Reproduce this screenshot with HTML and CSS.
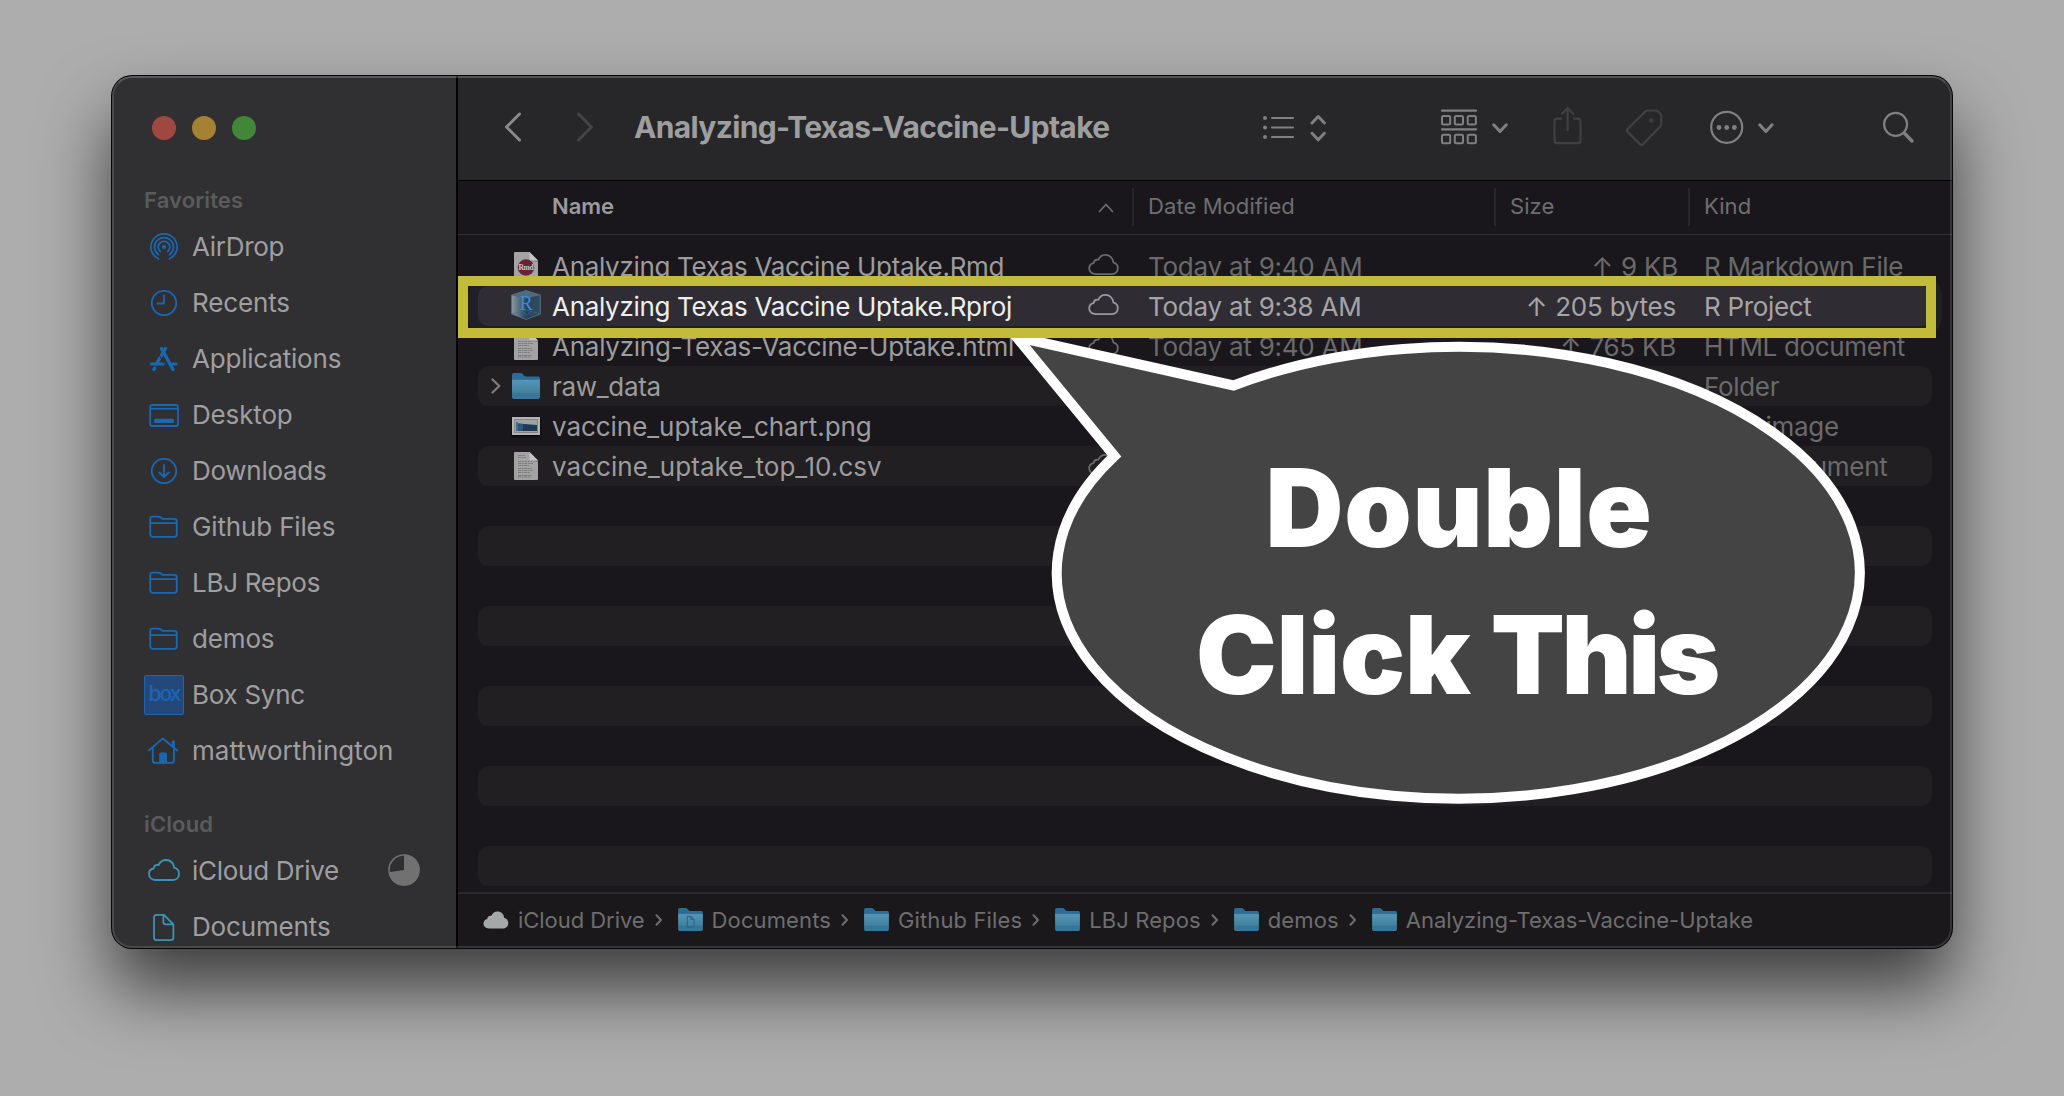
FILE: index.html
```html
<!DOCTYPE html>
<html lang="en">
<head>
<meta charset="utf-8">
<title>Analyzing-Texas-Vaccine-Uptake</title>
<link rel="stylesheet" href="styles.css">
</head>
<body>
<svg class="defs" width="0" height="0" aria-hidden="true">
  <defs>
    <linearGradient id="folderFront" x1="0" y1="0" x2="0" y2="1">
      <stop offset="0" stop-color="#5595b6"/><stop offset="0.7" stop-color="#43809f"/><stop offset="1" stop-color="#34739a"/>
    </linearGradient>
    <linearGradient id="cubeLeft" x1="0" y1="0" x2="1" y2="0">
      <stop offset="0" stop-color="#8a9aa3"/><stop offset="1" stop-color="#2d4357"/>
    </linearGradient>
    <linearGradient id="cubeRight" x1="0" y1="0" x2="1" y2="0">
      <stop offset="0" stop-color="#2a4259"/><stop offset="1" stop-color="#324e60"/>
    </linearGradient>
    <symbol id="folder" viewBox="0 0 28 26">
      <path d="M0 2.200C0 .8.8 0 2 0h6.500c1 0 1.500.3 2.200 1l1.600 1.700c.5.5 1 .7 1.800.7H26c1.300 0 2 .7 2 2V14H0z" fill="#2d6c96"/>
      <path d="M0 6.500h28V24c0 1.300-.7 2-2 2H2c-1.300 0-2-.7-2-2z" fill="url(#folderFront)"/>
      <path d="M0 6.300h28M0 20.700h28M0 22.500h28" stroke="#2f6a90" stroke-width=".7"/>
    </symbol>
    <symbol id="sheet" viewBox="0 0 24 28">
      <path d="M0 1Q0 0 1 0h14.500L24 8.500V27q0 1-1 1H1q-1 0-1-1z" fill="#a3a3a3"/>
      <path d="M15.500 0L24 8.500h-7.500q-1 0-1-1z" fill="#c4c4c4"/>
      <path d="M16 8.700h8v1.300z" fill="#777"/>
    </symbol>
    <symbol id="lines" viewBox="0 0 24 28">
      <path d="M4 3.500h7M4 5.500h8M4 9.500h14M4 11.500h15M4 13.500h11M4 16.500h14M4 18.500h15M4 20.500h12M4 23.500h14M4 25h13" stroke="#777" stroke-width=".9" stroke-dasharray="3 .6 2 .6"/>
    </symbol>
    <symbol id="cloud" viewBox="0 0 32 22">
      <path d="M8 21C4 21 1 18.600 1 15c0-3 2-5 4.600-5.500C6 7 8 5.600 10.600 6 12 3 14.600 1 18 1c4.600 0 8 3.300 8.200 7.700C29 9.500 31 11.800 31 14.700 31 18.300 28.500 21 25 21z" fill="none" stroke="currentColor" stroke-width="1.900" stroke-linejoin="round"/>
    </symbol>
    <symbol id="sideFolder" viewBox="-20 -20 40 40">
      <path d="M-13.700-8.600V7.300q0 2.500 2.500 2.500h21.500q2.500 0 2.500-2.500V-5.700q0-2.500-2.500-2.500H-.8q-1 0-1.700-.6l-1-.9q-.9-.7-2-.7h-6q-2.200 0-2.200 1.800zM-13.700-3.900h26.500" fill="none" stroke="currentColor" stroke-width="1.800" stroke-linejoin="round"/>
    </symbol>
    <symbol id="crumb" viewBox="0 0 8 12">
      <path d="M1.500 1.200L6 6l-4.500 4.800" fill="none" stroke="currentColor" stroke-width="2" stroke-linecap="round" stroke-linejoin="round"/>
    </symbol>
  </defs>
</svg>

<div class="window">
  <aside class="sidebar">
    <div class="lights"><i class="red"></i><i class="amber"></i><i class="green"></i></div>
    <h2 class="group">Favorites</h2>
    <ul class="places">
      <li><svg class="ico" viewBox="-20 -20 40 40"><g fill="none" stroke="currentColor" stroke-width="1.700" stroke-linecap="round"><path d="M-5.500 11.800A13.100 13.100 0 1 1 5.500 11.800"/><path d="M-5.500 7.800A9.500 9.500 0 1 1 5.500 7.800"/><path d="M-3.700 4.500A5.800 5.800 0 1 1 3.700 4.500"/></g><circle r="2" fill="currentColor"/></svg><span class="t1">AirDrop</span></li>
      <li><svg class="ico" viewBox="-20 -20 40 40"><g fill="none" stroke="currentColor" stroke-width="1.800" stroke-linecap="round" stroke-linejoin="round"><circle r="12.200"/><path d="M0-7.500V.5H-6.500"/></g></svg><span>Recents</span></li>
      <li><svg class="ico" viewBox="-20 -20 40 40"><g fill="none" stroke="currentColor" stroke-linecap="round"><path d="M-12.500 5h12.500M7.500 5h4.500" stroke-width="3.200"/><path d="M1.400-10.500L-7.500 5" stroke-width="3.400"/><path d="M-9.300 9.300L-10 10.400" stroke-width="3.400"/><path d="M-2.500-10.500L9 10.500" stroke-width="3.400"/></g><path d="M-4.200-6.500L1.500 3.600" stroke="#303032" stroke-width="1" transform="translate(-.6 2.400)"/></svg><span class="t2">Applications</span></li>
      <li><svg class="ico" viewBox="-20 -20 40 40"><rect x="-13.800" y="-10" width="27.800" height="21" rx="2" fill="none" stroke="currentColor" stroke-width="1.800"/><path d="M-13.800-6.300h27.800" stroke="currentColor" stroke-width="1.700"/><rect x="-9.800" y="3.700" width="19.700" height="4.200" rx="1" fill="currentColor"/></svg><span>Desktop</span></li>
      <li><svg class="ico" viewBox="-20 -20 40 40"><g fill="none" stroke="currentColor" stroke-width="1.800" stroke-linecap="round" stroke-linejoin="round"><circle r="12.200"/><path d="M0-6V6M-4.700 1.500L0 6.200 4.700 1.500"/></g></svg><span class="t4">Downloads</span></li>
      <li><svg class="ico"><use href="#sideFolder"/></svg><span>Github Files</span></li>
      <li><svg class="ico"><use href="#sideFolder"/></svg><span class="t4">LBJ Repos</span></li>
      <li><svg class="ico"><use href="#sideFolder"/></svg><span>demos</span></li>
      <li><b class="box">box</b><span class="t4">Box Sync</span></li>
      <li><svg class="ico" viewBox="-20 -20 40 40"><path d="M-15-.6L-1.200-12.600 13.200-.6M-11.200-3.500V9.500q0 2.400 2.400 2.400H7.600q2.400 0 2.400-2.400V-3.500M9.500-4v-5.500" fill="none" stroke="currentColor" stroke-width="1.900" stroke-linecap="round" stroke-linejoin="round"/><path d="M7.700-10.300h3.200V-2L7.700-5z" fill="currentColor"/><path d="M-4.800 12.500V3q0-1.500 1.500-1.500h4.800q1.500 0 1.500 1.500v9.500z" fill="currentColor"/></svg><span class="t3">mattworthington</span></li>
    </ul>
    <h2 class="group second">iCloud</h2>
    <ul class="places teal">
      <li><svg class="ico cl" viewBox="0 0 32 22"><use href="#cloud"/></svg><span class="t4">iCloud Drive</span>
        <svg class="pie" viewBox="-16 -16 32 32"><circle r="15" fill="none" stroke="currentColor" stroke-width="1.600"/><path d="M0 0V-15.500A15.500 15.500 0 1 1-15.300 2.200z" fill="currentColor"/></svg></li>
      <li><svg class="ico" viewBox="-20 -20 40 40"><path d="M-10-9.500q0-2.600 2.600-2.600H0L9.400-2.500V10.500q0 2.600-2.600 2.600H-7.400q-2.600 0-2.600-2.600zM-.6-12V-5q0 2.300 2.300 2.300H9" fill="none" stroke="currentColor" stroke-width="1.800" stroke-linejoin="round"/></svg><span>Documents</span></li>
    </ul>
  </aside>

  <main class="main">
    <header class="toolbar">
      <svg class="back" width="18" height="30" viewBox="0 0 18 30"><path d="M15.500 2L2.500 15l13 13"/></svg>
      <svg class="fwd" width="18" height="30" viewBox="0 0 18 30"><path d="M2.500 2l13 13-13 13"/></svg>
      <h1>Analyzing-Texas-Vaccine-Uptake</h1>
      <svg class="list" width="66" height="48" viewBox="1262 104 66 48"><path d="M1272 118h21M1272 127.500h21M1272 137h21" /><path d="M1312 123l6.200-6.500 6.200 6.500M1312 133.300l6.200 6.500 6.200-6.500" stroke-width="3"/><g class="dots"><circle cx="1265" cy="118" r="2"/><circle cx="1265" cy="127.500" r="2"/><circle cx="1265" cy="137" r="2"/></g></svg>
      <svg class="groupby" width="70" height="48" viewBox="1440 104 70 48"><path d="M1442 110.700h34M1442 129.300h34"/><g stroke-width="2"><rect x="1442" y="116" width="8.200" height="8.500" rx="1.500"/><rect x="1454.800" y="116" width="8.200" height="8.500" rx="1.500"/><rect x="1467.700" y="116" width="8.200" height="8.500" rx="1.500"/><rect x="1442" y="134.700" width="8.200" height="8.500" rx="1.500"/><rect x="1454.800" y="134.700" width="8.200" height="8.500" rx="1.500"/><rect x="1467.700" y="134.700" width="8.200" height="8.500" rx="1.500"/></g><path d="M1493.700 124.800l6.300 6.700 6.300-6.700" stroke-width="3"/></svg>
      <svg class="share off" width="32" height="48" viewBox="1552 104 32 48"><path d="M1561 118.700h-3.500q-3 0-3 3v18.500q0 3 3 3h20q3 0 3-3v-18.500q0-3-3-3h-3.500M1567.600 130v-21.500M1562 113.800l5.600-5.800 5.600 5.800"/></svg>
      <svg class="tag off" width="40" height="48" viewBox="1625 104 40 48"><path d="M1645.500 111.400q1-.9 2.300-.9h8q1.300 0 2.300 1l2.300 2.500q.9 1 .9 2.300v7.700q0 1.400-1 2.400l-17 17.700q-1.700 1.700-3.400 0l-12.200-12.200q-1.500-1.700.2-3.300z"/><circle class="dots" cx="1651.300" cy="120.500" r="2.200"/></svg>
      <svg class="more" width="68" height="48" viewBox="1709 104 68 48"><circle cx="1726.700" cy="127.300" r="15.500"/><g class="dots"><circle cx="1719" cy="127.500" r="2.400"/><circle cx="1726.700" cy="127.500" r="2.400"/><circle cx="1734.400" cy="127.500" r="2.400"/></g><path d="M1759.700 124.800l6.200 6.700 6.200-6.700" stroke-width="3"/></svg>
      <svg class="search" width="34" height="48" viewBox="1882 104 34 48"><circle cx="1895.600" cy="124.300" r="11.500"/><path d="M1904.200 133l7.800 8" stroke-width="3.400"/></svg>
    </header>

    <div class="thead">
      <div class="th name">Name<svg width="16" height="10" viewBox="0 0 16 10"><path d="M1.500 8.500L8 1.500l6.500 7" fill="none" stroke="#6c6c6c" stroke-width="1.700" stroke-linecap="round"/></svg></div>
      <div class="th date">Date Modified</div>
      <div class="th size">Size</div>
      <div class="th kind">Kind</div>
    </div>

    <div class="rows">
      <div class="row"><i></i><svg class="file" viewBox="0 0 24 28"><use href="#sheet"/><circle cx="12" cy="15.500" r="8.200" fill="#672338"/><text x="12" y="18" text-anchor="middle" class="rmd">Rmd</text></svg><span class="fn">Analyzing Texas Vaccine Uptake.Rmd</span><svg class="cloud"><use href="#cloud"/></svg><span>Today at 9:40 AM</span><span class="sz kb"><em>↑</em>9 KB</span><span class="kd">R Markdown File</span></div>
      <div class="row selected"><i></i><svg class="cube" viewBox="0 0 30 30"><path d="M15 .5L29.500 5v19L15 29.500.5 24V5z" fill="#3f5563"/><path d="M.5 5L15 8.500v21L.5 24z" fill="url(#cubeLeft)"/><path d="M15 8.500L29.500 5v19L15 29.500z" fill="url(#cubeRight)"/><path d="M15 .5L29.500 5 15 8.500.5 5z" fill="#536a77"/><path d="M15 .5L29.500 5v19L15 29.500.5 24V5z" fill="none" stroke="#4a7387" stroke-width=".8"/><path d="M.5 24L15 20l14.500 4" fill="none" stroke="#42697b" stroke-width=".6"/><text x="15" y="19.500" text-anchor="middle" class="rletter">R</text><path d="M10 22.500h3l3 2.500M17 24l2.500-1.500" stroke="#286090" stroke-width="1.200" fill="none"/></svg><span class="fn">Analyzing Texas Vaccine Uptake.Rproj</span><svg class="cloud"><use href="#cloud"/></svg><span>Today at 9:38 AM</span><span class="sz"><em>↑</em>205 bytes</span><span class="kd">R Project</span></div>
      <div class="row"><i></i><svg class="file" viewBox="0 0 24 28"><use href="#sheet"/><use href="#lines"/></svg><span class="fn dash">Analyzing-Texas-Vaccine-Uptake.html</span><svg class="cloud"><use href="#cloud"/></svg><span>Today at 9:40 AM</span><span class="sz"><em>↑</em>765 KB</span><span class="kd">HTML document</span></div>
      <div class="row"><svg class="disc" viewBox="0 0 10 16"><path d="M1.500 1.500L8.300 8l-6.800 6.500" fill="none" stroke="#7b7b7b" stroke-width="2.400" stroke-linecap="round" stroke-linejoin="round"/></svg><svg class="fold"><use href="#folder"/></svg><span class="fn raw">raw_data</span><i></i><span></span><span class="sz"></span><span class="kd">Folder</span></div>
      <div class="row"><i></i><svg class="pic" viewBox="0 0 28 18"><path d="M0 0h28v18H0z" fill="#b4b4b4"/><path d="M2 2h24v14H2z" fill="#858585"/><path d="M3 3h22v12H3z" fill="#a0a3a6"/><path d="M4 5h2v9H4z" fill="#3a6ea5"/><path d="M6 6.500L25 8v6H6z" fill="#1f3a55"/><path d="M6 6.500l5 .4V14H6z" fill="#2d5580"/></svg><span class="fn chart">vaccine_uptake_chart.png</span><i></i><span></span><span class="sz"></span><span class="kd">PNG image</span></div>
      <div class="row"><i></i><svg class="file" viewBox="0 0 24 28"><use href="#sheet"/><use href="#lines"/></svg><span class="fn us">vaccine_uptake_top_10.csv</span><svg class="cloud"><use href="#cloud"/></svg><span></span><span class="sz"></span><span class="kd">CSV Document</span></div>
      <div class="row"></div><div class="row"></div><div class="row"></div><div class="row"></div><div class="row"></div>
      <div class="row"></div><div class="row"></div><div class="row"></div><div class="row"></div><div class="row"></div>
    </div>

    <footer class="pathbar">
      <svg class="solid" viewBox="0 0 26 18"><path d="M6 17.500C2.500 17.500.5 15.500.5 12.600c0-2.500 1.600-4.200 3.700-4.700.4-2.200 2-3.400 4.200-3.100C9.500 2 11.700.5 14.500.5c3.700 0 6.400 2.700 6.600 6.300 2.500.6 4.200 2.600 4.200 5.200 0 3.200-2.200 5.500-5.300 5.500z" fill="#a5a8a9"/></svg><span class="c0">iCloud Drive</span>
      <svg class="sep"><use href="#crumb"/></svg><svg class="pf" viewBox="0 0 28 26"><use href="#folder"/><path d="M10.500 9.500h4l3.500 3.500v8.500h-7.500zM14.500 9.500V13H18" fill="none" stroke="#2b678f" stroke-width="1.200"/></svg><span>Documents</span>
      <svg class="sep"><use href="#crumb"/></svg><svg class="pf"><use href="#folder"/></svg><span class="c2">Github Files</span>
      <svg class="sep"><use href="#crumb"/></svg><svg class="pf"><use href="#folder"/></svg><span>LBJ Repos</span>
      <svg class="sep"><use href="#crumb"/></svg><svg class="pf"><use href="#folder"/></svg><span>demos</span>
      <svg class="sep"><use href="#crumb"/></svg><svg class="pf"><use href="#folder"/></svg><span class="last">Analyzing-Texas-Vaccine-Uptake</span>
    </footer>
  </main>
</div>

<div class="callout">
  <svg width="880" height="490" viewBox="1000 326 880 490"><path d="M1015.500 337L1232.500 385.500A401.500 226 0 1 1 1113.500 456Z" fill="#444" stroke="#fff" stroke-width="10" stroke-miterlimit="8"/></svg>
  <p><span class="line w1">Double</span><span class="line low"><span class="w2">Click</span> <span class="w3">This</span></span></p>
</div>
<div class="frame"></div>
</body>
</html>
```
FILE: styles.css
```css
* { box-sizing: border-box; }

body {
  margin: 0;
  width: 2064px;
  height: 1096px;
  overflow: hidden;
  position: relative;
  background: #adadad;
  font-family: Inter, "Liberation Sans", sans-serif;
  padding: 76px 112px;
}

h1, h2, p, ul { margin: 0; padding: 0; }
li { list-style: none; }
.defs { position: absolute; }

.window {
  position: relative;
  display: flex;
  width: 1840px;
  height: 872px;
  border-radius: 20px;
  overflow: hidden;
  background: #19171b;
  box-shadow: 0 0 0 1px #060606, 0 40px 70px rgba(0, 0, 0, .65);
}
/* bright hairline along the inner edge of the window */
.window::after {
  content: "";
  position: absolute;
  inset: 0;
  border: 2px solid rgba(255, 255, 255, .12);
  border-top-color: rgba(255, 255, 255, .2);
  border-radius: 20px;
}

/* Sidebar */
.sidebar {
  width: 346px;
  flex: none;
  height: 872px;
  overflow: hidden;
  background: #303032;
  border-right: 2px solid #020202;
  color: #9f9fa0;
  font-size: 26px;
}
.lights { display: flex; gap: 16px; padding: 40px 0 0 40px; }
.lights i { width: 24px; height: 24px; border-radius: 50%; }
.red { background: #9f4841; }
.amber { background: #a68134; }
.green { background: #418639; }
.group {
  margin: 44px 0 0 32px;
  height: 35px;
  line-height: 32px;
  font-size: 22px;
  font-weight: 600;
  letter-spacing: .13px;
  color: #5b5b5c;
}
.group.second { margin-top: 29px; }
.places li {
  display: flex;
  align-items: center;
  height: 56px;
  padding-left: 32px;
  letter-spacing: -.15px;
  line-height: 32px;
  white-space: nowrap;
}
.ico { width: 40px; height: 40px; margin-right: 8px; color: #1a67b3; flex: none; }
.teal .ico { color: #3d92b3; }
.ico.cl { width: 32px; height: 22px; margin: -2px 12px 0 4px; }
.places .t1 { letter-spacing: -.3px; }
.places .t2 { letter-spacing: -.2px; }
.places .t3 { letter-spacing: 0; }
.places .t4 { letter-spacing: -.28px; }
.box {
  width: 40px;
  height: 40px;
  margin-right: 8px;
  border: 1px solid #1b66b3;
  border-radius: 2px;
  background: #25487a;
  color: #1a66b5;
  font-size: 21px;
  font-weight: 500;
  line-height: 36px;
  text-align: center;
  letter-spacing: -1.9px;
}
.pie { width: 32px; height: 32px; margin-left: 49px; margin-top: -2px; color: #717172; }

/* Main pane */
.main { flex: 1; display: flex; flex-direction: column; min-width: 0; }

.toolbar {
  height: 105px;
  display: flex;
  align-items: center;
  padding: 0 36px 1px 46px;
  background: #272729;
  border-bottom: 1px solid #020202;
}
.toolbar svg {
  flex: none;
  fill: none;
  stroke: #808082;
  stroke-width: 2.2;
  stroke-linecap: round;
  stroke-linejoin: round;
}
.toolbar .dots { fill: #808082; stroke: none; }
.toolbar .off { stroke: #404042; }
.toolbar .off .dots { fill: #404042; }
.toolbar .back { stroke-width: 3; stroke: #8a8a8c; margin-top: -1px; }
.toolbar .fwd { stroke-width: 3; stroke: #454547; margin-left: 54px; margin-top: -1px; }
.toolbar h1 {
  margin-left: 40px;
  margin-top: -2px;
  width: 628px;
  font-size: 30px;
  line-height: 38px;
  font-weight: 650;
  letter-spacing: -.65px;
  color: #9e9e9f;
  white-space: nowrap;
}
.toolbar .groupby { margin-left: 112px; }
.toolbar .share { margin-left: 42px; }
.toolbar .tag { margin-left: 41px; }
.toolbar .more { margin-left: 44px; }
.toolbar .search { margin-left: auto; }

.thead {
  height: 54px;
  display: flex;
  align-items: center;
  padding-bottom: 2px;
  border-bottom: 1px solid #302e32;
  color: #6e6e6f;
  font-size: 22px;
  letter-spacing: .08px;
}
.th { height: 38px; line-height: 36px; border-left: 2px solid #272629; padding-left: 14px; }
.th.name {
  width: 674px;
  display: flex;
  align-items: center;
  justify-content: space-between;
  border: 0;
  padding: 0 18px 0 94px;
  color: #9b9b9c;
  font-weight: 600;
  line-height: 34px;
  padding-bottom: 2px;
  letter-spacing: -.05px;
}
.th.name svg { margin-top: 4px; }
.th.date { width: 362px; }
.th.size { width: 194px; }

.rows { flex: 1; min-height: 0; overflow: hidden; padding: 11px 20px 0; }
.row {
  height: 40px;
  border-radius: 10px;
  display: grid;
  grid-template-columns: 34px 40px 536px 60px 350px 178px 1fr;
  align-items: center;
  font-size: 26px;
  line-height: 32px;
  color: #6a6a6b;
  letter-spacing: -.24px;
  white-space: nowrap;
}
.row span { padding-top: 2px; }
.row:nth-child(even) { background: #211f21; }
.row .fn { color: #9d9c9e; letter-spacing: -.31px; }
.row .us { letter-spacing: .05px; }
.row .raw { letter-spacing: -.3px; }
.row .chart { letter-spacing: -.05px; }
.row .dash { letter-spacing: -.25px; }
.row .sz { text-align: right; }
.row .kb { margin-right: -2px; }
.row .sz em { font-style: normal; margin-right: 8px; }
.row .kd { padding-left: 28px; letter-spacing: -.33px; }
.row.selected { background: #2f2d33; box-shadow: 0 0 0 10px #211f26; color: #a5a4a7; }
.row.selected .fn { color: #eeeeef; }
.cloud { width: 31px; height: 21px; color: #69686a; margin-top: -3px; }
.selected .cloud { color: #99989b; }
.file { width: 24px; height: 28px; margin-left: 2px; }
.cube { width: 30px; height: 30px; margin-left: -1px; margin-top: -3px; }
.fold { width: 28px; height: 26px; }
.pic { width: 28px; height: 18px; filter: drop-shadow(0 1px 1px #000); }
.disc { width: 10px; height: 16px; margin-left: 13px; margin-top: -1px; }
.rmd { font: 700 7.500px "Liberation Serif", serif; fill: #d5c5ca; }
.rletter { font: 400 20px "Liberation Serif", serif; fill: #3b8cd6; }

.pathbar {
  height: 56px;
  flex: none;
  display: flex;
  align-items: center;
  padding: 0 0 3px 25px;
  background: #1a181b;
  border-top: 2px solid #2b292d;
  color: #6e6e6f;
  font-size: 22px;
  line-height: 28px;
  letter-spacing: .12px;
  white-space: nowrap;
}
.solid { width: 26px; height: 18px; margin: 0 9px 0 0; }
.pf { width: 25px; height: 23px; margin-right: 9px; }
.sep { width: 8px; height: 12px; margin: 1px 15px 0 10px; color: #6e6e6f; }
.c0 { letter-spacing: -.05px; }
.pathbar .last { letter-spacing: 0; }

/* Annotation layer */
.callout { position: absolute; left: 1001px; top: 326px; width: 880px; height: 490px; }
.callout svg { display: block; }
.callout p {
  position: absolute;
  left: 51px;
  top: 108px;
  width: 814px;
  color: #fff;
  font-size: 108px;
  font-weight: 900;
  line-height: 147px;
  text-align: center;
}
.line { display: block; }
.low { padding-right: 5px; word-spacing: -1px; }
.w1 { letter-spacing: .7px; }
.w2 { letter-spacing: -.2px; }
.w3 { letter-spacing: -3.4px; }
.frame {
  position: absolute;
  left: 458px;
  top: 276px;
  width: 1478px;
  height: 62px;
  border: 10px solid #c3bc3b;
}
```
